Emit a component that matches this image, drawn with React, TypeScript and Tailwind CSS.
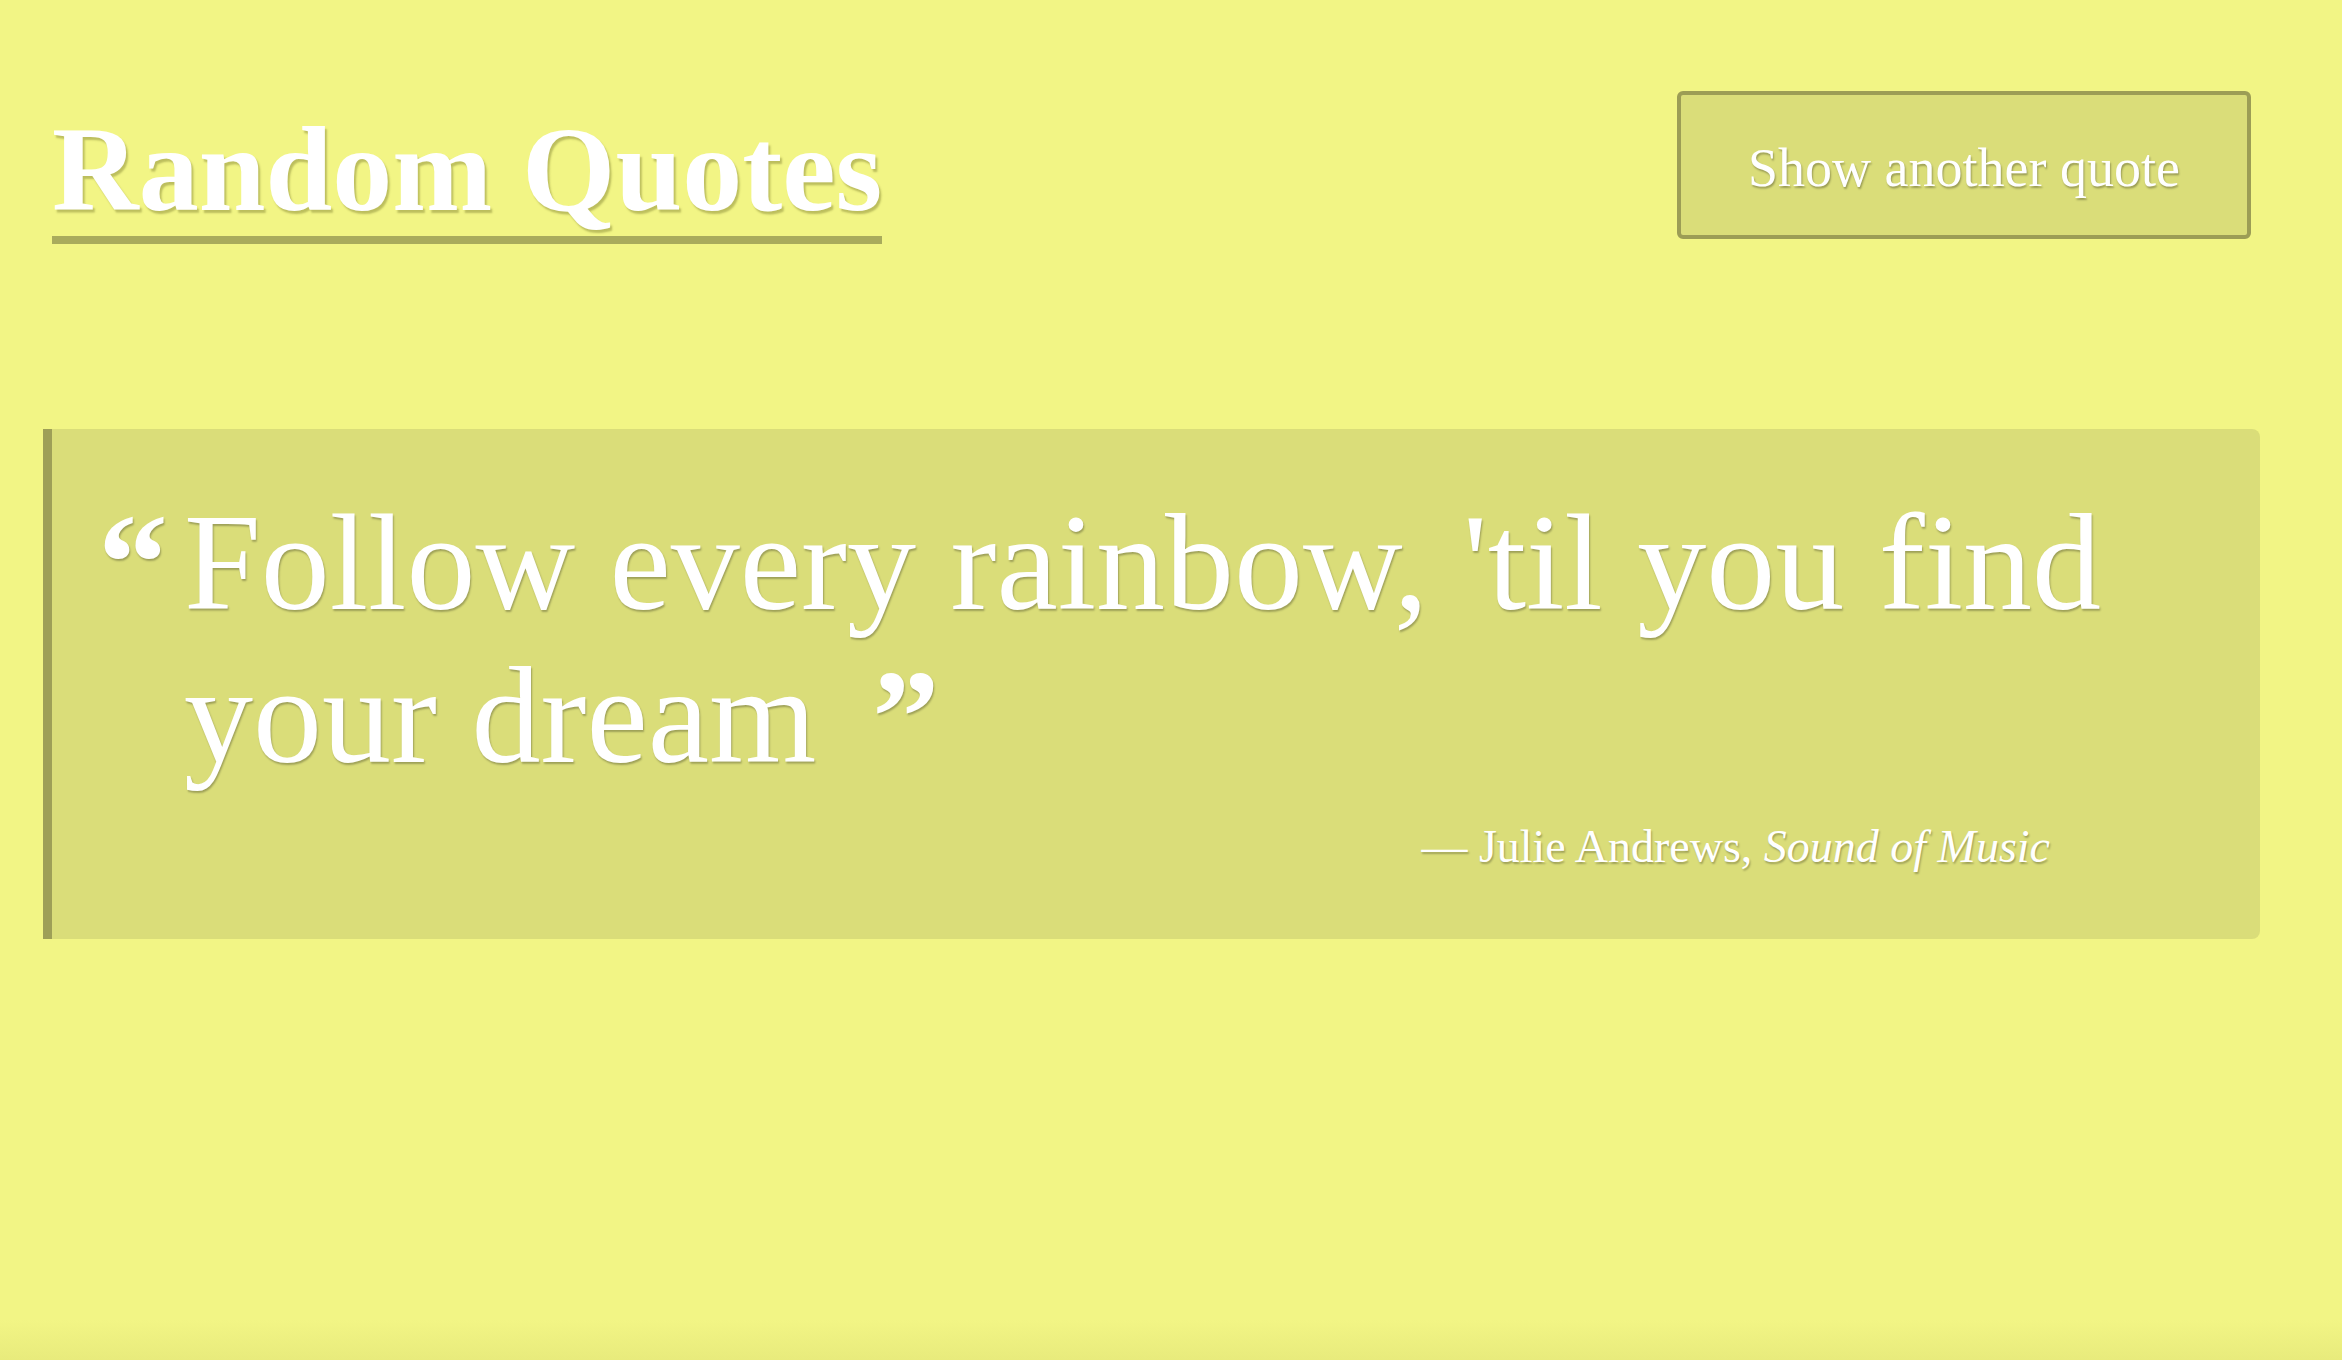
import React from 'react';

export default function App() {
  const quote = {
    text: "Follow every rainbow, 'til you find your dream",
    author: 'Julie Andrews',
    source: 'Sound of Music',
  };

  return (
    <div className="min-h-screen flex flex-col bg-[#f2f585] text-white font-['Liberation_Serif','Times_New_Roman',serif]">
      <div className="flex-1">
        <header className="flex items-start justify-between pl-[52px] pr-[91px]">
          <h1 className="mt-[110px] pb-[6px] border-b-[8px] border-[#a9ab5c] text-[120px] leading-none font-bold [text-shadow:2px_3px_2px_rgba(90,90,20,0.35)]">
            Random Quotes
          </h1>
          <button className="mt-[91px] w-[574px] h-[148px] flex items-center justify-center pt-[6px] bg-[#dadd79] border-4 border-[#9c9d55] rounded-[6px] text-[54px] leading-none text-white [text-shadow:1px_2px_2px_rgba(0,0,0,0.3)]">
            Show another quote
          </button>
        </header>

        <blockquote className="mt-[185px] ml-[43px] mr-[82px] bg-[#dadd79] border-l-[9px] border-[#9e9f57] rounded-r-[8px] pt-[57px] pb-[69px] pl-[46px] [text-shadow:1px_2px_2px_rgba(0,0,0,0.28)]">
          <div className="flex items-start">
            <span className="w-[86px] shrink-0 text-[140px] leading-[153px] font-bold">“</span>
            <p className="pr-[110px] text-[138px] leading-[153px]">
              {quote.text}
              <span className="inline-block ml-[56px] text-[134px] leading-none font-bold">”</span>
            </p>
          </div>
          <footer className="mt-[32px] pr-[210px] text-right text-[46px] leading-none">
            — {quote.author}, <cite className="italic">{quote.source}</cite>
          </footer>
        </blockquote>
      </div>
      <div className="h-[40px] bg-gradient-to-b from-[#f2f585] to-[#e8eb7c]" />
    </div>
  );
}
